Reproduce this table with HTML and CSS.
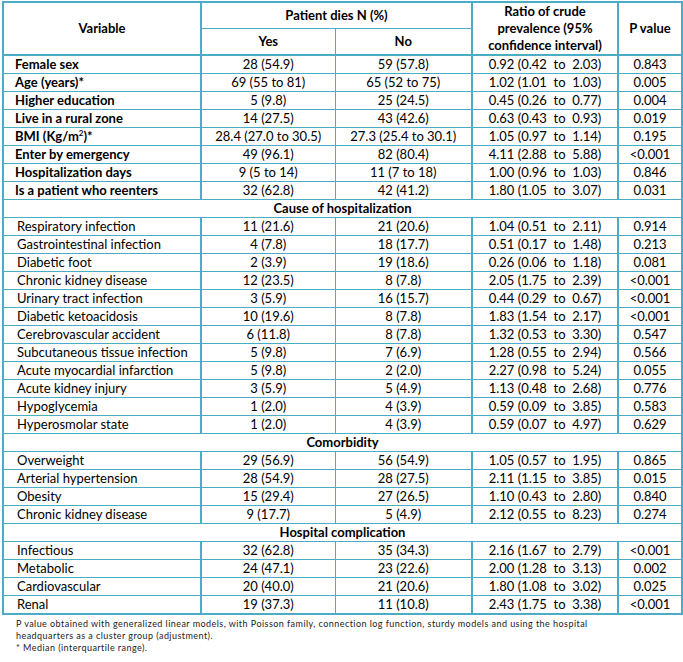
FILE: index.html
```html
<!DOCTYPE html>
<html lang="en">
<head>
<meta charset="utf-8">
<title>Table</title>
<link rel="stylesheet" href="styles.css">
</head>
<body>
<div class="page">
<table class="data">
  <colgroup>
    <col class="c-var">
    <col class="c-yes">
    <col class="c-no">
    <col class="c-ratio">
    <col class="c-p">
  </colgroup>
  <thead>
    <tr class="h1">
      <th rowspan="2" class="bl">Variable</th>
      <th colspan="2" class="bl">Patient dies N (%)</th>
      <th rowspan="2" class="bl ratio-h">Ratio of crude prevalence (95% confidence interval)</th>
      <th rowspan="2" class="bl">P value</th>
    </tr>
    <tr class="h2">
      <th class="bl">Yes</th>
      <th>No</th>
    </tr>
  </thead>
  <tbody>
    <tr class="b"><td class="var">Female sex</td><td class="bl">28 (54.9)</td><td>59 (57.8)</td><td class="bl ci">0.92 (0.42  to  2.03)</td><td class="bl">0.843</td></tr>
    <tr class="b"><td class="var">Age (years)*</td><td class="bl">69 (55 to 81)</td><td>65 (52 to 75)</td><td class="bl ci">1.02 (1.01  to  1.03)</td><td class="bl">0.005</td></tr>
    <tr class="b"><td class="var">Higher education</td><td class="bl">5 (9.8)</td><td>25 (24.5)</td><td class="bl ci">0.45 (0.26  to  0.77)</td><td class="bl">0.004</td></tr>
    <tr class="b"><td class="var">Live in a rural zone</td><td class="bl">14 (27.5)</td><td>43 (42.6)</td><td class="bl ci">0.63 (0.43  to  0.93)</td><td class="bl">0.019</td></tr>
    <tr class="b"><td class="var">BMI (Kg/m<sup>2</sup>)*</td><td class="bl">28.4 (27.0 to 30.5)</td><td>27.3 (25.4 to 30.1)</td><td class="bl ci">1.05 (0.97  to  1.14)</td><td class="bl">0.195</td></tr>
    <tr class="b"><td class="var">Enter by emergency</td><td class="bl">49 (96.1)</td><td>82 (80.4)</td><td class="bl ci">4.11 (2.88  to  5.88)</td><td class="bl">&lt;0.001</td></tr>
    <tr class="b"><td class="var">Hospitalization days</td><td class="bl">9 (5 to 14)</td><td>11 (7 to 18)</td><td class="bl ci">1.00 (0.96  to  1.03)</td><td class="bl">0.846</td></tr>
    <tr class="b"><td class="var">Is a patient who reenters</td><td class="bl">32 (62.8)</td><td>42 (41.2)</td><td class="bl ci">1.80 (1.05  to  3.07)</td><td class="bl">0.031</td></tr>

    <tr class="sec"><td colspan="5">Cause of hospitalization</td></tr>
    <tr><td class="var">Respiratory infection</td><td class="bl">11 (21.6)</td><td>21 (20.6)</td><td class="bl ci">1.04 (0.51  to  2.11)</td><td class="bl">0.914</td></tr>
    <tr><td class="var">Gastrointestinal infection</td><td class="bl">4 (7.8)</td><td>18 (17.7)</td><td class="bl ci">0.51 (0.17  to  1.48)</td><td class="bl">0.213</td></tr>
    <tr><td class="var">Diabetic foot</td><td class="bl">2 (3.9)</td><td>19 (18.6)</td><td class="bl ci">0.26 (0.06  to  1.18)</td><td class="bl">0.081</td></tr>
    <tr><td class="var">Chronic kidney disease</td><td class="bl">12 (23.5)</td><td>8 (7.8)</td><td class="bl ci">2.05 (1.75  to  2.39)</td><td class="bl">&lt;0.001</td></tr>
    <tr><td class="var">Urinary tract infection</td><td class="bl">3 (5.9)</td><td>16 (15.7)</td><td class="bl ci">0.44 (0.29  to  0.67)</td><td class="bl">&lt;0.001</td></tr>
    <tr><td class="var">Diabetic ketoacidosis</td><td class="bl">10 (19.6)</td><td>8 (7.8)</td><td class="bl ci">1.83 (1.54  to  2.17)</td><td class="bl">&lt;0.001</td></tr>
    <tr><td class="var">Cerebrovascular accident</td><td class="bl">6 (11.8)</td><td>8 (7.8)</td><td class="bl ci">1.32 (0.53  to  3.30)</td><td class="bl">0.547</td></tr>
    <tr><td class="var">Subcutaneous tissue infection</td><td class="bl">5 (9.8)</td><td>7 (6.9)</td><td class="bl ci">1.28 (0.55  to  2.94)</td><td class="bl">0.566</td></tr>
    <tr><td class="var">Acute myocardial infarction</td><td class="bl">5 (9.8)</td><td>2 (2.0)</td><td class="bl ci">2.27 (0.98  to  5.24)</td><td class="bl">0.055</td></tr>
    <tr><td class="var">Acute kidney injury</td><td class="bl">3 (5.9)</td><td>5 (4.9)</td><td class="bl ci">1.13 (0.48  to  2.68)</td><td class="bl">0.776</td></tr>
    <tr><td class="var">Hypoglycemia</td><td class="bl">1 (2.0)</td><td>4 (3.9)</td><td class="bl ci">0.59 (0.09  to  3.85)</td><td class="bl">0.583</td></tr>
    <tr><td class="var">Hyperosmolar state</td><td class="bl">1 (2.0)</td><td>4 (3.9)</td><td class="bl ci">0.59 (0.07  to  4.97)</td><td class="bl">0.629</td></tr>

    <tr class="sec"><td colspan="5">Comorbidity</td></tr>
    <tr><td class="var">Overweight</td><td class="bl">29 (56.9)</td><td>56 (54.9)</td><td class="bl ci">1.05 (0.57  to  1.95)</td><td class="bl">0.865</td></tr>
    <tr><td class="var">Arterial hypertension</td><td class="bl">28 (54.9)</td><td>28 (27.5)</td><td class="bl ci">2.11 (1.15  to  3.85)</td><td class="bl">0.015</td></tr>
    <tr><td class="var">Obesity</td><td class="bl">15 (29.4)</td><td>27 (26.5)</td><td class="bl ci">1.10 (0.43  to  2.80)</td><td class="bl">0.840</td></tr>
    <tr><td class="var">Chronic kidney disease</td><td class="bl">9 (17.7)</td><td>5 (4.9)</td><td class="bl ci">2.12 (0.55  to  8.23)</td><td class="bl">0.274</td></tr>

    <tr class="sec"><td colspan="5">Hospital complication</td></tr>
    <tr><td class="var">Infectious</td><td class="bl">32 (62.8)</td><td>35 (34.3)</td><td class="bl ci">2.16 (1.67  to  2.79)</td><td class="bl">&lt;0.001</td></tr>
    <tr><td class="var">Metabolic</td><td class="bl">24 (47.1)</td><td>23 (22.6)</td><td class="bl ci">2.00 (1.28  to  3.13)</td><td class="bl">0.002</td></tr>
    <tr><td class="var">Cardiovascular</td><td class="bl">20 (40.0)</td><td>21 (20.6)</td><td class="bl ci">1.80 (1.08  to  3.02)</td><td class="bl">0.025</td></tr>
    <tr><td class="var">Renal</td><td class="bl">19 (37.3)</td><td>11 (10.8)</td><td class="bl ci">2.43 (1.75  to  3.38)</td><td class="bl">&lt;0.001</td></tr>
  </tbody>
</table>
<div class="notes">
  <p>P value obtained with generalized linear models, with Poisson family, connection log function, sturdy models and using the hospital headquarters as a cluster group (adjustment).</p>
  <p>* Median (interquartile range).</p>
</div>
</div>
</body>
</html>
```

FILE: styles.css
```css
html, body {
  margin: 0;
  padding: 0;
  background: #ffffff;
}

.page {
  padding: 1px 2px 0 2px;
  font-family: "Lato", "Liberation Sans", sans-serif;
  color: #000000;
}

.data {
  border-collapse: collapse;
  table-layout: fixed;
  width: 679px;
  font-size: 13px;
  border: 2px solid #4bacc6;
}

.c-var { width: 198px; }
.c-yes { width: 134px; }
.c-no { width: 137px; }
.c-ratio { width: 146px; }
.c-p { width: 64px; }

.data th,
.data td {
  padding: 0;
  border-top: 1px solid #4bacc6;
  border-bottom: 1px solid #4bacc6;
  border-left: 1px solid #4bacc6;
  text-align: center;
  vertical-align: middle;
  line-height: 17px;
  white-space: nowrap;
}

.data th {
  font-weight: bold;
}

.data .bl {
  border-left: 2px solid #4bacc6;
}

.data thead tr {
  height: 26px;
}

.data thead tr.h2 th {
  border-bottom: 2px solid #4bacc6;
}

.data thead th[rowspan] {
  border-bottom: 2px solid #4bacc6;
}

.data th.ratio-h {
  white-space: normal;
  padding: 0 6px;
}

.data tbody tr {
  height: 18px;
}

.data td.var {
  text-align: left;
  padding-left: 13px;
}

.data tr.b td.var {
  font-weight: bold;
  padding-left: 11px;
}

.data td.ci {
  white-space: pre;
}

.data tr.sec td {
  font-weight: bold;
  text-align: center;
}

.data sup {
  font-size: 8px;
  line-height: 0;
  vertical-align: 5px;
}

.notes {
  padding: 3px 0 0 14px;
  font-size: 9px;
  letter-spacing: 0.45px;
  color: #222222;
}

.notes p {
  margin: 0;
  line-height: 12px;
  width: 580px;
}
```
